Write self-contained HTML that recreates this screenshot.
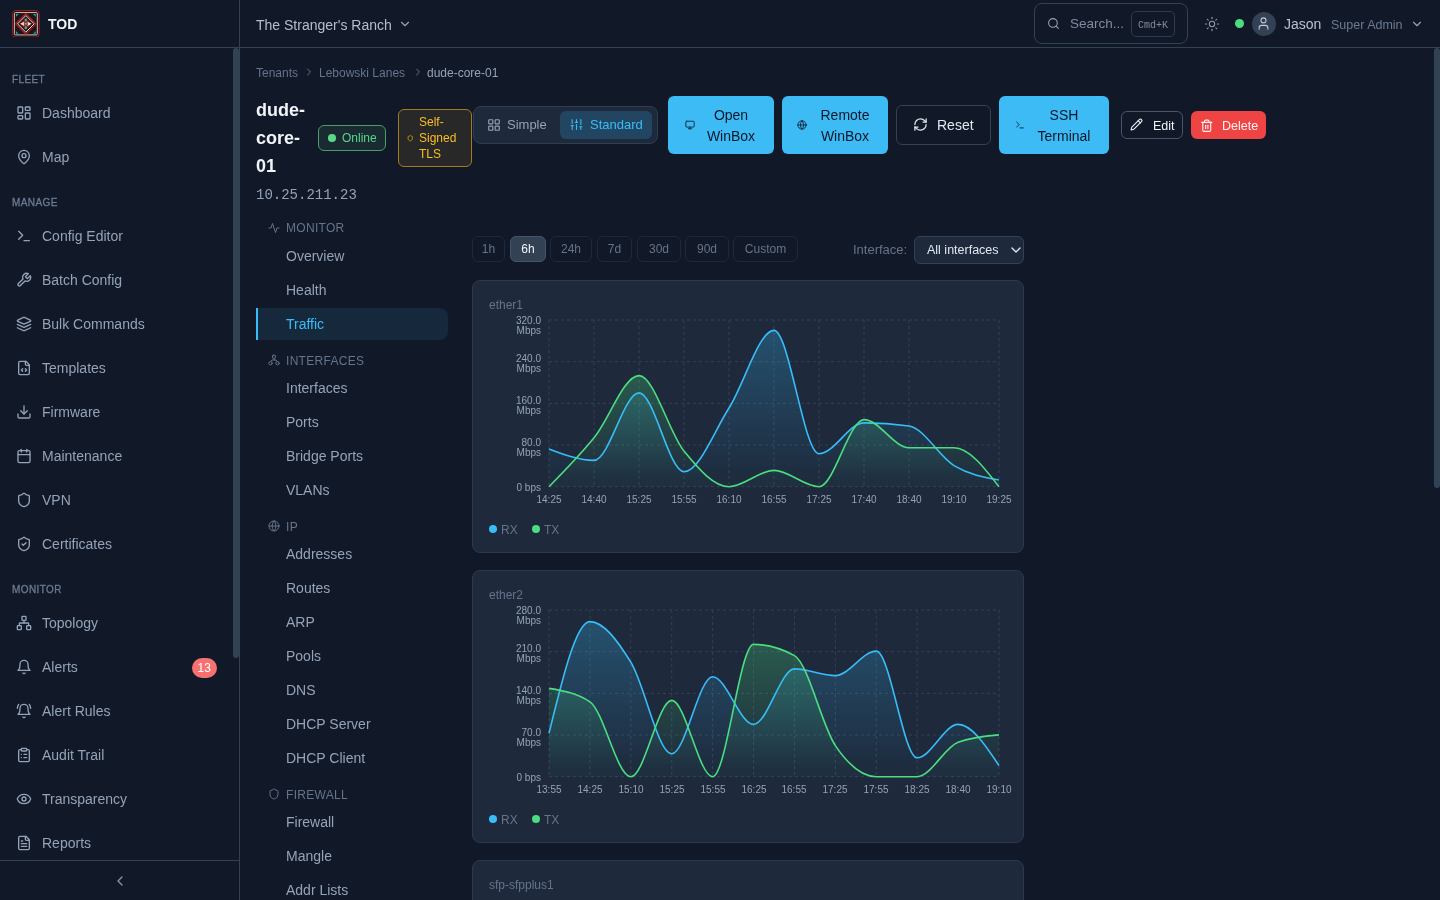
<!DOCTYPE html>
<html><head><meta charset="utf-8"><title>TOD</title>
<style>
html,body{margin:0;padding:0}
body{width:1440px;height:900px;overflow:hidden;position:relative;background:#111827;font-family:"Liberation Sans",sans-serif}
.t{position:absolute;white-space:nowrap;will-change:transform}
.ic{position:absolute;display:block}
.box{position:absolute}
.hl{position:absolute;height:1px;background:#334155}
.vl{position:absolute;width:1px;background:#334155}
.thumb{position:absolute;background:#334155;border-radius:3px}
.badge13{position:absolute;left:192px;top:658px;width:24.5px;height:20px;border-radius:10px;background:#f87171;color:#fff;font-size:12px;line-height:21px;text-align:center;will-change:transform}
.yl{width:41px;text-align:right;font-size:10px;line-height:10px;color:#94a3b8}
.xl{width:40px;text-align:center;font-size:10px;line-height:12px;color:#94a3b8}
</style></head><body>
<div id="sb">
<div class="hl" style="left:0;top:47px;width:239px"></div>
<div class="vl" style="left:239px;top:0;height:900px"></div>
<svg class="ic" style="left:12px;top:9.6px;width:27.7px;height:27.7px" viewBox="0 0 28 28">
<rect x="0.5" y="0.5" width="27" height="27" rx="3.5" fill="#23141c" stroke="#9b1c1c" stroke-width="1"/>
<rect x="2.4" y="2.6" width="23.2" height="22.6" rx="1.2" fill="none" stroke="#c9c3b5" stroke-width="1"/>
<path d="M14 3.6 L24.4 14 L14 24.4 L3.6 14Z" fill="none" stroke="#b91c1c" stroke-width="1.1"/>
<path d="M14 5.6 L22.4 14 L14 22.4 L5.6 14Z" fill="none" stroke="#e6dfcf" stroke-width="1"/>
<path d="M8 14 L14 8 L20 14 L14 20Z" fill="#8f1d1d"/>
<path d="M8.3 14 L12.4 11.8 L12.4 16.2Z" fill="#f5ecd0"/><path d="M19.7 14 L15.6 11.8 L15.6 16.2Z" fill="#f5ecd0"/>
<circle cx="14" cy="14" r="1.7" fill="none" stroke="#b91c1c" stroke-width="0.8"/><circle cx="14" cy="14" r="1" fill="#2dd4bf"/>
<path d="M12.8 8.8h2.4l-0.4 2.8h-1.6z" fill="#2ab5a5"/><path d="M12.8 19.2h2.4l-0.4-2.8h-1.6z" fill="#2ab5a5"/>
<path d="M4 4h2.8l-2.8 2.8z" fill="#14a898"/><path d="M24 4h-2.8l2.8 2.8z" fill="#14a898"/><path d="M4 24h2.8l-2.8-2.8z" fill="#14a898"/><path d="M24 24h-2.8l2.8-2.8z" fill="#14a898"/>
</svg>
<div class="t" style="left:48px;top:14.00px;font-size:14px;line-height:20px;color:#f1f5f9;font-weight:700;">TOD</div>
<div class="t" style="left:12px;top:73.10px;font-size:10px;line-height:14px;color:#6b7b92;font-weight:400;letter-spacing:0.4px;-webkit-text-stroke:0.3px #6b7b92;">FLEET</div>
<svg class="ic" style="left:16px;top:105px;width:16px;height:16px" viewBox="0 0 24 24" fill="none" stroke="#94a3b8" stroke-width="2" stroke-linecap="round" stroke-linejoin="round"><rect width="7" height="9" x="3" y="3" rx="1"/><rect width="7" height="5" x="14" y="3" rx="1"/><rect width="7" height="9" x="14" y="12" rx="1"/><rect width="7" height="5" x="3" y="16" rx="1"/></svg>
<div class="t" style="left:42px;top:102.60px;font-size:14px;line-height:20px;color:#94a3b8;font-weight:400;">Dashboard</div>
<svg class="ic" style="left:16px;top:149px;width:16px;height:16px" viewBox="0 0 24 24" fill="none" stroke="#94a3b8" stroke-width="2" stroke-linecap="round" stroke-linejoin="round"><path d="M20 10c0 4.993-5.539 10.193-7.399 11.799a1 1 0 0 1-1.202 0C9.539 20.193 4 14.993 4 10a8 8 0 0 1 16 0"/><circle cx="12" cy="10" r="3"/></svg>
<div class="t" style="left:42px;top:146.60px;font-size:14px;line-height:20px;color:#94a3b8;font-weight:400;">Map</div>
<div class="t" style="left:12px;top:195.60px;font-size:10px;line-height:14px;color:#6b7b92;font-weight:400;letter-spacing:0.4px;-webkit-text-stroke:0.3px #6b7b92;">MANAGE</div>
<svg class="ic" style="left:16px;top:228px;width:16px;height:16px" viewBox="0 0 24 24" fill="none" stroke="#94a3b8" stroke-width="2" stroke-linecap="round" stroke-linejoin="round"><polyline points="4 17 10 11 4 5"/><line x1="12" x2="20" y1="19" y2="19"/></svg>
<div class="t" style="left:42px;top:225.60px;font-size:14px;line-height:20px;color:#94a3b8;font-weight:400;">Config Editor</div>
<svg class="ic" style="left:16px;top:272px;width:16px;height:16px" viewBox="0 0 24 24" fill="none" stroke="#94a3b8" stroke-width="2" stroke-linecap="round" stroke-linejoin="round"><path d="M14.7 6.3a1 1 0 0 0 0 1.4l1.6 1.6a1 1 0 0 0 1.4 0l3.77-3.77a6 6 0 0 1-7.94 7.94l-6.91 6.91a2.12 2.12 0 0 1-3-3l6.91-6.91a6 6 0 0 1 7.94-7.94l-3.76 3.76z"/></svg>
<div class="t" style="left:42px;top:269.60px;font-size:14px;line-height:20px;color:#94a3b8;font-weight:400;">Batch Config</div>
<svg class="ic" style="left:16px;top:316px;width:16px;height:16px" viewBox="0 0 24 24" fill="none" stroke="#94a3b8" stroke-width="2" stroke-linecap="round" stroke-linejoin="round"><path d="m12.83 2.18a2 2 0 0 0-1.66 0L2.6 6.08a1 1 0 0 0 0 1.83l8.58 3.91a2 2 0 0 0 1.66 0l8.58-3.9a1 1 0 0 0 0-1.83Z"/><path d="m22 17.65-9.17 4.16a2 2 0 0 1-1.66 0L2 17.65"/><path d="m22 12.65-9.17 4.16a2 2 0 0 1-1.66 0L2 12.65"/></svg>
<div class="t" style="left:42px;top:313.60px;font-size:14px;line-height:20px;color:#94a3b8;font-weight:400;">Bulk Commands</div>
<svg class="ic" style="left:16px;top:360px;width:16px;height:16px" viewBox="0 0 24 24" fill="none" stroke="#94a3b8" stroke-width="2" stroke-linecap="round" stroke-linejoin="round"><path d="M15 2H6a2 2 0 0 0-2 2v16a2 2 0 0 0 2 2h12a2 2 0 0 0 2-2V7Z"/><path d="M14 2v4a2 2 0 0 0 2 2h4"/><path d="m10 13-2 2 2 2"/><path d="m14 17 2-2-2-2"/></svg>
<div class="t" style="left:42px;top:357.60px;font-size:14px;line-height:20px;color:#94a3b8;font-weight:400;">Templates</div>
<svg class="ic" style="left:16px;top:404px;width:16px;height:16px" viewBox="0 0 24 24" fill="none" stroke="#94a3b8" stroke-width="2" stroke-linecap="round" stroke-linejoin="round"><path d="M21 15v4a2 2 0 0 1-2 2H5a2 2 0 0 1-2-2v-4"/><polyline points="7 10 12 15 17 10"/><line x1="12" x2="12" y1="15" y2="3"/></svg>
<div class="t" style="left:42px;top:401.60px;font-size:14px;line-height:20px;color:#94a3b8;font-weight:400;">Firmware</div>
<svg class="ic" style="left:16px;top:448px;width:16px;height:16px" viewBox="0 0 24 24" fill="none" stroke="#94a3b8" stroke-width="2" stroke-linecap="round" stroke-linejoin="round"><path d="M8 2v4"/><path d="M16 2v4"/><rect width="18" height="18" x="3" y="4" rx="2"/><path d="M3 10h18"/></svg>
<div class="t" style="left:42px;top:445.60px;font-size:14px;line-height:20px;color:#94a3b8;font-weight:400;">Maintenance</div>
<svg class="ic" style="left:16px;top:492px;width:16px;height:16px" viewBox="0 0 24 24" fill="none" stroke="#94a3b8" stroke-width="2" stroke-linecap="round" stroke-linejoin="round"><path d="M20 13c0 5-3.5 7.5-7.66 8.95a1 1 0 0 1-.67-.01C7.5 20.5 4 18 4 13V6a1 1 0 0 1 1-1c2 0 4.5-1.2 6.24-2.72a1.17 1.17 0 0 1 1.52 0C14.51 3.810 17 5 19 5a1 1 0 0 1 1 1z"/></svg>
<div class="t" style="left:42px;top:489.60px;font-size:14px;line-height:20px;color:#94a3b8;font-weight:400;">VPN</div>
<svg class="ic" style="left:16px;top:536px;width:16px;height:16px" viewBox="0 0 24 24" fill="none" stroke="#94a3b8" stroke-width="2" stroke-linecap="round" stroke-linejoin="round"><path d="M20 13c0 5-3.5 7.5-7.66 8.95a1 1 0 0 1-.67-.01C7.5 20.5 4 18 4 13V6a1 1 0 0 1 1-1c2 0 4.5-1.2 6.24-2.72a1.17 1.17 0 0 1 1.52 0C14.51 3.810 17 5 19 5a1 1 0 0 1 1 1z"/><path d="m9 12 2 2 4-4"/></svg>
<div class="t" style="left:42px;top:533.60px;font-size:14px;line-height:20px;color:#94a3b8;font-weight:400;">Certificates</div>
<div class="t" style="left:12px;top:582.60px;font-size:10px;line-height:14px;color:#6b7b92;font-weight:400;letter-spacing:0.4px;-webkit-text-stroke:0.3px #6b7b92;">MONITOR</div>
<svg class="ic" style="left:16px;top:615px;width:16px;height:16px" viewBox="0 0 24 24" fill="none" stroke="#94a3b8" stroke-width="2" stroke-linecap="round" stroke-linejoin="round"><rect x="16" y="16" width="6" height="6" rx="1"/><rect x="2" y="16" width="6" height="6" rx="1"/><rect x="9" y="2" width="6" height="6" rx="1"/><path d="M5 16v-3a1 1 0 0 1 1-1h12a1 1 0 0 1 1 1v3"/><path d="M12 12V8"/></svg>
<div class="t" style="left:42px;top:612.60px;font-size:14px;line-height:20px;color:#94a3b8;font-weight:400;">Topology</div>
<svg class="ic" style="left:16px;top:659px;width:16px;height:16px" viewBox="0 0 24 24" fill="none" stroke="#94a3b8" stroke-width="2" stroke-linecap="round" stroke-linejoin="round"><path d="M6 8a6 6 0 0 1 12 0c0 7 3 9 3 9H3s3-2 3-9"/><path d="M10.3 21a1.94 1.94 0 0 0 3.4 0"/></svg>
<div class="t" style="left:42px;top:656.60px;font-size:14px;line-height:20px;color:#94a3b8;font-weight:400;">Alerts</div>
<svg class="ic" style="left:16px;top:703px;width:16px;height:16px" viewBox="0 0 24 24" fill="none" stroke="#94a3b8" stroke-width="2" stroke-linecap="round" stroke-linejoin="round"><path d="M6 8a6 6 0 0 1 12 0c0 7 3 9 3 9H3s3-2 3-9"/><path d="M10.3 21a1.94 1.94 0 0 0 3.4 0"/><path d="M4 2C2.8 3.7 2 5.7 2 8"/><path d="M22 8c0-2.3-.8-4.3-2-6"/></svg>
<div class="t" style="left:42px;top:700.60px;font-size:14px;line-height:20px;color:#94a3b8;font-weight:400;">Alert Rules</div>
<svg class="ic" style="left:16px;top:747px;width:16px;height:16px" viewBox="0 0 24 24" fill="none" stroke="#94a3b8" stroke-width="2" stroke-linecap="round" stroke-linejoin="round"><rect width="8" height="4" x="8" y="2" rx="1" ry="1"/><path d="M16 4h2a2 2 0 0 1 2 2v14a2 2 0 0 1-2 2H6a2 2 0 0 1-2-2V6a2 2 0 0 1 2-2h2"/><path d="M12 11h4"/><path d="M12 16h4"/><path d="M8 11h.01"/><path d="M8 16h.01"/></svg>
<div class="t" style="left:42px;top:744.60px;font-size:14px;line-height:20px;color:#94a3b8;font-weight:400;">Audit Trail</div>
<svg class="ic" style="left:16px;top:791px;width:16px;height:16px" viewBox="0 0 24 24" fill="none" stroke="#94a3b8" stroke-width="2" stroke-linecap="round" stroke-linejoin="round"><path d="M2.062 12.348a1 1 0 0 1 0-.696 10.75 10.75 0 0 1 19.876 0 1 1 0 0 1 0 .696 10.75 10.75 0 0 1-19.876 0"/><circle cx="12" cy="12" r="3"/></svg>
<div class="t" style="left:42px;top:788.60px;font-size:14px;line-height:20px;color:#94a3b8;font-weight:400;">Transparency</div>
<svg class="ic" style="left:16px;top:835px;width:16px;height:16px" viewBox="0 0 24 24" fill="none" stroke="#94a3b8" stroke-width="2" stroke-linecap="round" stroke-linejoin="round"><path d="M15 2H6a2 2 0 0 0-2 2v16a2 2 0 0 0 2 2h12a2 2 0 0 0 2-2V7Z"/><path d="M14 2v4a2 2 0 0 0 2 2h4"/><path d="M10 9H8"/><path d="M16 13H8"/><path d="M16 17H8"/></svg>
<div class="t" style="left:42px;top:832.60px;font-size:14px;line-height:20px;color:#94a3b8;font-weight:400;">Reports</div>
<div class="badge13">13</div>
<div class="thumb" style="left:233px;top:48px;width:6px;height:610px"></div>
<div class="hl" style="left:0;top:860px;width:239px"></div>
<svg class="ic" style="left:111.5px;top:872.5px;width:16px;height:16px" viewBox="0 0 24 24" fill="none" stroke="#8594aa" stroke-width="2" stroke-linecap="round" stroke-linejoin="round"><path d="m15 18-6-6 6-6"/></svg>
</div>
<div class="hl" style="left:240px;top:47px;width:1200px"></div>
<div class="t" style="left:256px;top:14.50px;font-size:14px;line-height:20px;color:#b3bfce;font-weight:400;">The Stranger's Ranch</div>
<svg class="ic" style="left:397.6px;top:16.5px;width:14px;height:14px" viewBox="0 0 24 24" fill="none" stroke="#94a3b8" stroke-width="2" stroke-linecap="round" stroke-linejoin="round"><path d="m6 9 6 6 6-6"/></svg>
<div class="box" style="left:1034px;top:3px;width:152px;height:39px;border-radius:8px;border:1px solid #334155"></div>
<svg class="ic" style="left:1047px;top:17px;width:13px;height:13px" viewBox="0 0 24 24" fill="none" stroke="#94a3b8" stroke-width="2" stroke-linecap="round" stroke-linejoin="round"><circle cx="11" cy="11" r="8"/><path d="m21 21-4.3-4.3"/></svg>
<div class="t" style="left:1069.5px;top:14.30px;font-size:13.5px;line-height:19px;color:#7f8b9f;font-weight:400;">Search...</div>
<div class="box" style="left:1130.5px;top:10.5px;width:42px;height:24px;border-radius:5px;border:1px solid #2f3b4e"></div>
<div class="t" style="left:1137.5px;top:18.50px;font-size:10px;line-height:14px;color:#7f8b9f;font-weight:400;font-family:'Liberation Mono',monospace;">Cmd+K</div>
<svg class="ic" style="left:1203.5px;top:15.5px;width:16px;height:16px" viewBox="0 0 24 24" fill="none" stroke="#8e9bb0" stroke-width="1.6" stroke-linecap="round" stroke-linejoin="round"><circle cx="12" cy="12" r="4"/><path d="M12 2v2"/><path d="M12 20v2"/><path d="m4.93 4.93 1.41 1.41"/><path d="m17.66 17.66 1.41 1.41"/><path d="M2 12h2"/><path d="M20 12h2"/><path d="m6.34 17.66-1.41 1.41"/><path d="m19.07 4.93-1.41 1.41"/></svg>
<div class="box" style="left:1235px;top:19px;width:9px;height:9px;border-radius:50%;background:#4ade80"></div>
<div class="box" style="left:1252px;top:12px;width:24px;height:24px;border-radius:50%;background:#334155"></div>
<svg class="ic" style="left:1256px;top:16px;width:15px;height:15px" viewBox="0 0 24 24" fill="none" stroke="#c0cad8" stroke-width="1.7" stroke-linecap="round" stroke-linejoin="round"><path d="M19 21v-2a4 4 0 0 0-4-4H9a4 4 0 0 0-4 4v2"/><circle cx="12" cy="7" r="4"/></svg>
<div class="t" style="left:1284px;top:13.50px;font-size:14px;line-height:20px;color:#b8c2d0;font-weight:400;">Jason</div>
<div class="t" style="left:1331px;top:16.00px;font-size:12.5px;line-height:18px;color:#6b7a90;font-weight:400;">Super Admin</div>
<svg class="ic" style="left:1409.5px;top:17px;width:14px;height:14px" viewBox="0 0 24 24" fill="none" stroke="#94a3b8" stroke-width="2" stroke-linecap="round" stroke-linejoin="round"><path d="m6 9 6 6 6-6"/></svg>
<div class="thumb" style="left:1434px;top:48px;width:6px;height:440px"></div>
<div class="t" style="left:256px;top:64.50px;font-size:12px;line-height:17px;color:#64748b;font-weight:400;">Tenants</div>
<svg class="ic" style="left:303px;top:66px;width:12px;height:12px" viewBox="0 0 24 24" fill="none" stroke="#64748b" stroke-width="2" stroke-linecap="round" stroke-linejoin="round"><path d="m9 18 6-6-6-6"/></svg>
<div class="t" style="left:319px;top:64.50px;font-size:12px;line-height:17px;color:#64748b;font-weight:400;">Lebowski Lanes</div>
<svg class="ic" style="left:412px;top:66px;width:12px;height:12px" viewBox="0 0 24 24" fill="none" stroke="#64748b" stroke-width="2" stroke-linecap="round" stroke-linejoin="round"><path d="m9 18 6-6-6-6"/></svg>
<div class="t" style="left:427px;top:64.50px;font-size:12px;line-height:17px;color:#94a3b8;font-weight:400;">dude-core-01</div>
<div class="t" style="left:256px;top:96px;font-size:18px;line-height:28px;font-weight:700;color:#f1f5f9">dude-<br>core-<br>01</div>
<div class="t" style="left:256px;top:185px;font-size:14px;line-height:20px;color:#94a3b8;font-family:'Liberation Mono',monospace">10.25.211.23</div>
<div class="box" style="left:318px;top:125px;width:66px;height:24px;border-radius:6px;border:1px solid #46a06c;background:#1a2a31"></div>
<div class="box" style="left:328px;top:134px;width:7.5px;height:7.5px;border-radius:50%;background:#5ad88a"></div>
<div class="t" style="left:341.7px;top:130.00px;font-size:12px;line-height:17px;color:#58d68a;font-weight:400;">Online</div>
<div class="box" style="left:398px;top:109px;width:72px;height:56px;border-radius:6px;border:1px solid #a07c1c;background:#282828"></div>
<svg class="ic" style="left:406.5px;top:135px;width:6.5px;height:6.5px" viewBox="0 0 24 24" fill="none" stroke="#eab308" stroke-width="2.5" stroke-linecap="round" stroke-linejoin="round"><path d="M20 13c0 5-3.5 7.5-7.66 8.95a1 1 0 0 1-.67-.01C7.5 20.5 4 18 4 13V6a1 1 0 0 1 1-1c2 0 4.5-1.2 6.24-2.72a1.17 1.17 0 0 1 1.52 0C14.51 3.810 17 5 19 5a1 1 0 0 1 1 1z"/></svg>
<div class="t" style="left:419px;top:114px;font-size:12px;line-height:16px;color:#fbbf24">Self-<br>Signed<br>TLS</div>
<div class="box" style="left:472.5px;top:106px;width:183px;height:36px;border-radius:8px;border:1px solid #2e3d52;background:#1e293b"></div>
<svg class="ic" style="left:487px;top:117.5px;width:14px;height:14px" viewBox="0 0 24 24" fill="none" stroke="#94a3b8" stroke-width="2" stroke-linecap="round" stroke-linejoin="round"><rect width="7" height="7" x="3" y="3" rx="1"/><rect width="7" height="7" x="14" y="3" rx="1"/><rect width="7" height="7" x="14" y="14" rx="1"/><rect width="7" height="7" x="3" y="14" rx="1"/></svg>
<div class="t" style="left:507px;top:116.00px;font-size:13px;line-height:18px;color:#94a3b8;font-weight:400;">Simple</div>
<div class="box" style="left:560px;top:111px;width:92px;height:28px;border-radius:6px;background:#224662"></div>
<svg class="ic" style="left:570px;top:118px;width:13px;height:13px" viewBox="0 0 24 24" fill="none" stroke="#38bdf8" stroke-width="2" stroke-linecap="round" stroke-linejoin="round"><line x1="4" x2="4" y1="21" y2="14"/><line x1="4" x2="4" y1="10" y2="3"/><line x1="12" x2="12" y1="21" y2="12"/><line x1="12" x2="12" y1="8" y2="3"/><line x1="20" x2="20" y1="21" y2="16"/><line x1="20" x2="20" y1="12" y2="3"/><line x1="2" x2="6" y1="14" y2="14"/><line x1="10" x2="14" y1="8" y2="8"/><line x1="18" x2="22" y1="16" y2="16"/></svg>
<div class="t" style="left:590px;top:116.00px;font-size:13px;line-height:18px;color:#38bdf8;font-weight:400;">Standard</div>
<div class="box" style="left:668px;top:96px;width:106px;height:58px;border-radius:6px;background:#3dbbf5"></div>
<svg class="ic" style="left:684.5px;top:120.0px;width:10px;height:10px" viewBox="0 0 24 24" fill="none" stroke="#0f172a" stroke-width="2" stroke-linecap="round" stroke-linejoin="round"><rect width="20" height="14" x="2" y="3" rx="2"/><line x1="8" x2="16" y1="21" y2="21"/><line x1="12" x2="12" y1="17" y2="21"/></svg>
<div class="t" style="left:698px;top:105px;width:66px;text-align:center;font-size:14px;line-height:21px;color:#0f172a">Open<br>WinBox</div>
<div class="box" style="left:782px;top:96px;width:106px;height:58px;border-radius:6px;background:#3dbbf5"></div>
<svg class="ic" style="left:797px;top:120.0px;width:10px;height:10px" viewBox="0 0 24 24" fill="none" stroke="#0f172a" stroke-width="2" stroke-linecap="round" stroke-linejoin="round"><circle cx="12" cy="12" r="10"/><path d="M12 2a14.5 14.5 0 0 0 0 20 14.5 14.5 0 0 0 0-20"/><path d="M2 12h20"/></svg>
<div class="t" style="left:812px;top:105px;width:66px;text-align:center;font-size:14px;line-height:21px;color:#0f172a">Remote<br>WinBox</div>
<div class="box" style="left:896px;top:105px;width:93px;height:38px;border-radius:6px;border:1px solid #334155"></div>
<svg class="ic" style="left:913px;top:117px;width:15px;height:15px" viewBox="0 0 24 24" fill="none" stroke="#e2e8f0" stroke-width="2" stroke-linecap="round" stroke-linejoin="round"><path d="M3 12a9 9 0 0 1 9-9 9.75 9.75 0 0 1 6.74 2.74L21 8"/><path d="M21 3v5h-5"/><path d="M21 12a9 9 0 0 1-9 9 9.75 9.75 0 0 1-6.74-2.74L3 16"/><path d="M8 16H3v5"/></svg>
<div class="t" style="left:937px;top:115.00px;font-size:14px;line-height:20px;color:#e2e8f0;font-weight:400;">Reset</div>
<div class="box" style="left:999px;top:96px;width:110px;height:58px;border-radius:6px;background:#3dbbf5"></div>
<svg class="ic" style="left:1015px;top:120.0px;width:10px;height:10px" viewBox="0 0 24 24" fill="none" stroke="#0f172a" stroke-width="2" stroke-linecap="round" stroke-linejoin="round"><polyline points="4 17 10 11 4 5"/><line x1="12" x2="20" y1="19" y2="19"/></svg>
<div class="t" style="left:1029px;top:105px;width:70px;text-align:center;font-size:14px;line-height:21px;color:#0f172a">SSH<br>Terminal</div>
<div class="box" style="left:1121px;top:111px;width:60px;height:26px;border-radius:6px;border:1px solid #475569"></div>
<svg class="ic" style="left:1130px;top:118px;width:13px;height:13px" viewBox="0 0 24 24" fill="none" stroke="#f1f5f9" stroke-width="2" stroke-linecap="round" stroke-linejoin="round"><path d="M21.174 6.812a1 1 0 0 0-3.986-3.987L3.842 16.174a2 2 0 0 0-.5.83l-1.321 4.352a.5.5 0 0 0 .623.622l4.353-1.32a2 2 0 0 0 .83-.497z"/><path d="m15 5 4 4"/></svg>
<div class="t" style="left:1152.5px;top:116.50px;font-size:12.5px;line-height:18px;color:#f1f5f9;font-weight:400;">Edit</div>
<div class="box" style="left:1191px;top:111px;width:74.5px;height:28px;border-radius:6px;background:#ef4444"></div>
<svg class="ic" style="left:1199.5px;top:118.5px;width:13.5px;height:13.5px" viewBox="0 0 24 24" fill="none" stroke="#fef2f2" stroke-width="2" stroke-linecap="round" stroke-linejoin="round"><path d="M3 6h18"/><path d="M19 6v14c0 1-1 2-2 2H7c-1 0-2-1-2-2V6"/><path d="M8 6V4c0-1 1-2 2-2h4c1 0 2 1 2 2v2"/><line x1="10" x2="10" y1="11" y2="17"/><line x1="14" x2="14" y1="11" y2="17"/></svg>
<div class="t" style="left:1221.5px;top:116.50px;font-size:12.5px;line-height:18px;color:#fef2f2;font-weight:400;">Delete</div>
<svg class="ic" style="left:268px;top:221.7px;width:12px;height:12px" viewBox="0 0 24 24" fill="none" stroke="#64748b" stroke-width="2" stroke-linecap="round" stroke-linejoin="round"><path d="M22 12h-4l-3 9L9 3l-3 9H2"/></svg>
<div class="t" style="left:286px;top:220.20px;font-size:12px;line-height:17px;color:#64748b;font-weight:400;letter-spacing:0.3px;">MONITOR</div>
<div class="t" style="left:286px;top:246.20px;font-size:14px;line-height:20px;color:#94a3b8;font-weight:400;">Overview</div>
<div class="t" style="left:286px;top:280.20px;font-size:14px;line-height:20px;color:#94a3b8;font-weight:400;">Health</div>
<div class="box" style="left:256px;top:308px;width:192px;height:32px;border-radius:0 8px 8px 0;background:#16283c"></div>
<div class="box" style="left:256px;top:308px;width:2px;height:32px;background:#38bdf8"></div>
<div class="t" style="left:286px;top:314.20px;font-size:14px;line-height:20px;color:#38bdf8;font-weight:400;">Traffic</div>
<svg class="ic" style="left:268px;top:354px;width:12px;height:12px" viewBox="0 0 24 24" fill="none" stroke="#64748b" stroke-width="2" stroke-linecap="round" stroke-linejoin="round"><rect x="9" y="2.5" width="6" height="6" rx="1.5"/><circle cx="5" cy="18.5" r="3.3"/><circle cx="19" cy="18.5" r="3.3"/><path d="M5.5 15.2L8 12h8l2.5 3.2"/><path d="M12 12V8.5"/></svg>
<div class="t" style="left:286px;top:352.50px;font-size:12px;line-height:17px;color:#64748b;font-weight:400;letter-spacing:0.3px;">INTERFACES</div>
<div class="t" style="left:286px;top:378.20px;font-size:14px;line-height:20px;color:#94a3b8;font-weight:400;">Interfaces</div>
<div class="t" style="left:286px;top:412.20px;font-size:14px;line-height:20px;color:#94a3b8;font-weight:400;">Ports</div>
<div class="t" style="left:286px;top:446.20px;font-size:14px;line-height:20px;color:#94a3b8;font-weight:400;">Bridge Ports</div>
<div class="t" style="left:286px;top:480.20px;font-size:14px;line-height:20px;color:#94a3b8;font-weight:400;">VLANs</div>
<svg class="ic" style="left:268px;top:520px;width:12px;height:12px" viewBox="0 0 24 24" fill="none" stroke="#64748b" stroke-width="2" stroke-linecap="round" stroke-linejoin="round"><circle cx="12" cy="12" r="10"/><path d="M12 2a14.5 14.5 0 0 0 0 20 14.5 14.5 0 0 0 0-20"/><path d="M2 12h20"/></svg>
<div class="t" style="left:286px;top:518.50px;font-size:12px;line-height:17px;color:#64748b;font-weight:400;letter-spacing:0.3px;">IP</div>
<div class="t" style="left:286px;top:544.20px;font-size:14px;line-height:20px;color:#94a3b8;font-weight:400;">Addresses</div>
<div class="t" style="left:286px;top:578.20px;font-size:14px;line-height:20px;color:#94a3b8;font-weight:400;">Routes</div>
<div class="t" style="left:286px;top:612.20px;font-size:14px;line-height:20px;color:#94a3b8;font-weight:400;">ARP</div>
<div class="t" style="left:286px;top:646.20px;font-size:14px;line-height:20px;color:#94a3b8;font-weight:400;">Pools</div>
<div class="t" style="left:286px;top:680.20px;font-size:14px;line-height:20px;color:#94a3b8;font-weight:400;">DNS</div>
<div class="t" style="left:286px;top:714.20px;font-size:14px;line-height:20px;color:#94a3b8;font-weight:400;">DHCP Server</div>
<div class="t" style="left:286px;top:748.20px;font-size:14px;line-height:20px;color:#94a3b8;font-weight:400;">DHCP Client</div>
<svg class="ic" style="left:268px;top:788px;width:12px;height:12px" viewBox="0 0 24 24" fill="none" stroke="#64748b" stroke-width="2" stroke-linecap="round" stroke-linejoin="round"><path d="M20 13c0 5-3.5 7.5-7.66 8.95a1 1 0 0 1-.67-.01C7.5 20.5 4 18 4 13V6a1 1 0 0 1 1-1c2 0 4.5-1.2 6.24-2.72a1.17 1.17 0 0 1 1.52 0C14.51 3.810 17 5 19 5a1 1 0 0 1 1 1z"/></svg>
<div class="t" style="left:286px;top:786.50px;font-size:12px;line-height:17px;color:#64748b;font-weight:400;letter-spacing:0.3px;">FIREWALL</div>
<div class="t" style="left:286px;top:812.20px;font-size:14px;line-height:20px;color:#94a3b8;font-weight:400;">Firewall</div>
<div class="t" style="left:286px;top:846.20px;font-size:14px;line-height:20px;color:#94a3b8;font-weight:400;">Mangle</div>
<div class="t" style="left:286px;top:880.20px;font-size:14px;line-height:20px;color:#94a3b8;font-weight:400;">Addr Lists</div>
<div class="box" style="left:472px;top:236px;width:33px;height:26px;border-radius:6px;border:1px solid #1e293b;box-sizing:border-box"></div>
<div class="t" style="left:472px;top:241px;width:33px;text-align:center;font-size:12px;line-height:16px;color:#64748b">1h</div>
<div class="box" style="left:509.5px;top:236px;width:36px;height:26px;border-radius:6px;border:1px solid #475569;background:#334155;box-sizing:border-box"></div>
<div class="t" style="left:509.5px;top:241px;width:36px;text-align:center;font-size:12px;line-height:16px;color:#f1f5f9">6h</div>
<div class="box" style="left:550px;top:236px;width:42px;height:26px;border-radius:6px;border:1px solid #1e293b;box-sizing:border-box"></div>
<div class="t" style="left:550px;top:241px;width:42px;text-align:center;font-size:12px;line-height:16px;color:#64748b">24h</div>
<div class="box" style="left:597px;top:236px;width:35px;height:26px;border-radius:6px;border:1px solid #1e293b;box-sizing:border-box"></div>
<div class="t" style="left:597px;top:241px;width:35px;text-align:center;font-size:12px;line-height:16px;color:#64748b">7d</div>
<div class="box" style="left:637px;top:236px;width:44px;height:26px;border-radius:6px;border:1px solid #1e293b;box-sizing:border-box"></div>
<div class="t" style="left:637px;top:241px;width:44px;text-align:center;font-size:12px;line-height:16px;color:#64748b">30d</div>
<div class="box" style="left:685px;top:236px;width:44px;height:26px;border-radius:6px;border:1px solid #1e293b;box-sizing:border-box"></div>
<div class="t" style="left:685px;top:241px;width:44px;text-align:center;font-size:12px;line-height:16px;color:#64748b">90d</div>
<div class="box" style="left:733px;top:236px;width:65px;height:26px;border-radius:6px;border:1px solid #1e293b;box-sizing:border-box"></div>
<div class="t" style="left:733px;top:241px;width:65px;text-align:center;font-size:12px;line-height:16px;color:#64748b">Custom</div>
<div class="t" style="left:853px;top:240.50px;font-size:13px;line-height:18px;color:#64748b;font-weight:400;">Interface:</div>
<div class="box" style="left:914px;top:236px;width:110px;height:28px;border-radius:6px;border:1px solid #334155;background:#1e293b;box-sizing:border-box"></div>
<div class="t" style="left:927px;top:240.50px;font-size:12.5px;line-height:18px;color:#e2e8f0;font-weight:400;">All interfaces</div>
<svg class="ic" style="left:1007.5px;top:242px;width:16px;height:16px" viewBox="0 0 24 24" fill="none" stroke="#e2e8f0" stroke-width="2" stroke-linecap="round" stroke-linejoin="round"><path d="m6 9 6 6 6-6"/></svg>
<div class="box" style="left:472px;top:280px;width:552px;height:273px;border-radius:8px;border:1px solid #2b3a50;background:#1e293b;box-sizing:border-box"></div>
<div class="t" style="left:489px;top:297.00px;font-size:12px;line-height:17px;color:#64748b;font-weight:400;">ether1</div>
<svg class="ic" style="left:0;top:0;width:1440px;height:900px;overflow:visible" viewBox="0 0 1440 900"><defs><linearGradient id="rxg280" x1="0" y1="0" x2="0" y2="1"><stop offset="5%" stop-color="#38bdf8" stop-opacity="0.26"/><stop offset="95%" stop-color="#38bdf8" stop-opacity="0.02"/></linearGradient><linearGradient id="txg280" x1="0" y1="0" x2="0" y2="1"><stop offset="5%" stop-color="#4ade80" stop-opacity="0.26"/><stop offset="95%" stop-color="#4ade80" stop-opacity="0.02"/></linearGradient></defs><line x1="549" x2="999" y1="320.00" y2="320.00" stroke="#334155" stroke-dasharray="3 3"/><line x1="549" x2="999" y1="361.68" y2="361.68" stroke="#334155" stroke-dasharray="3 3"/><line x1="549" x2="999" y1="403.35" y2="403.35" stroke="#334155" stroke-dasharray="3 3"/><line x1="549" x2="999" y1="445.02" y2="445.02" stroke="#334155" stroke-dasharray="3 3"/><line x1="549" x2="999" y1="486.70" y2="486.70" stroke="#334155" stroke-dasharray="3 3"/><line x1="549.00" x2="549.00" y1="320" y2="486.7" stroke="#334155" stroke-dasharray="3 3"/><line x1="594.00" x2="594.00" y1="320" y2="486.7" stroke="#334155" stroke-dasharray="3 3"/><line x1="639.00" x2="639.00" y1="320" y2="486.7" stroke="#334155" stroke-dasharray="3 3"/><line x1="684.00" x2="684.00" y1="320" y2="486.7" stroke="#334155" stroke-dasharray="3 3"/><line x1="729.00" x2="729.00" y1="320" y2="486.7" stroke="#334155" stroke-dasharray="3 3"/><line x1="774.00" x2="774.00" y1="320" y2="486.7" stroke="#334155" stroke-dasharray="3 3"/><line x1="819.00" x2="819.00" y1="320" y2="486.7" stroke="#334155" stroke-dasharray="3 3"/><line x1="864.00" x2="864.00" y1="320" y2="486.7" stroke="#334155" stroke-dasharray="3 3"/><line x1="909.00" x2="909.00" y1="320" y2="486.7" stroke="#334155" stroke-dasharray="3 3"/><line x1="999.00" x2="999.00" y1="320" y2="486.7" stroke="#334155" stroke-dasharray="3 3"/><path d="M549.00,448.90C564.00,454.65,579.00,460.40,594.00,460.40C609.00,460.40,624.00,392.90,639.00,392.90C654.00,392.90,669.00,471.80,684.00,471.80C699.00,471.80,714.00,431.57,729.00,408.00C744.00,384.43,759.00,330.40,774.00,330.40C789.00,330.40,804.00,453.80,819.00,453.80C834.00,453.80,849.00,422.90,864.00,422.90C879.00,422.90,894.00,423.93,909.00,426.00C924.00,428.07,939.00,456.60,954.00,465.60C969.00,474.60,984.00,477.30,999.00,480.00L999,486.7L549,486.7Z" fill="url(#rxg280)"/><path d="M549.00,486.70C564.00,471.51,579.00,456.32,594.00,437.80C609.00,419.28,624.00,375.60,639.00,375.60C654.00,375.60,669.00,432.58,684.00,451.10C699.00,469.62,714.00,486.70,729.00,486.70C744.00,486.70,759.00,470.40,774.00,470.40C789.00,470.40,804.00,486.70,819.00,486.70C834.00,486.70,849.00,419.60,864.00,419.60C879.00,419.60,894.00,447.80,909.00,447.80C924.00,447.80,939.00,447.80,954.00,447.80C969.00,447.80,984.00,467.25,999.00,486.70L999,486.7L549,486.7Z" fill="url(#txg280)"/><path d="M549.00,448.90C564.00,454.65,579.00,460.40,594.00,460.40C609.00,460.40,624.00,392.90,639.00,392.90C654.00,392.90,669.00,471.80,684.00,471.80C699.00,471.80,714.00,431.57,729.00,408.00C744.00,384.43,759.00,330.40,774.00,330.40C789.00,330.40,804.00,453.80,819.00,453.80C834.00,453.80,849.00,422.90,864.00,422.90C879.00,422.90,894.00,423.93,909.00,426.00C924.00,428.07,939.00,456.60,954.00,465.60C969.00,474.60,984.00,477.30,999.00,480.00" fill="none" stroke="#38bdf8" stroke-width="1.6"/><path d="M549.00,486.70C564.00,471.51,579.00,456.32,594.00,437.80C609.00,419.28,624.00,375.60,639.00,375.60C654.00,375.60,669.00,432.58,684.00,451.10C699.00,469.62,714.00,486.70,729.00,486.70C744.00,486.70,759.00,470.40,774.00,470.40C789.00,470.40,804.00,486.70,819.00,486.70C834.00,486.70,849.00,419.60,864.00,419.60C879.00,419.60,894.00,447.80,909.00,447.80C924.00,447.80,939.00,447.80,954.00,447.80C969.00,447.80,984.00,467.25,999.00,486.70" fill="none" stroke="#4ade80" stroke-width="1.6"/></svg>
<div class="t yl" style="left:500px;top:316.00px;">320.0<br>Mbps</div>
<div class="t yl" style="left:500px;top:354.18px;">240.0<br>Mbps</div>
<div class="t yl" style="left:500px;top:395.85px;">160.0<br>Mbps</div>
<div class="t yl" style="left:500px;top:437.52px;">80.0<br>Mbps</div>
<div class="t yl" style="left:500px;top:482.70px;">0 bps</div>
<div class="t xl" style="left:529.00px;top:494px;">14:25</div>
<div class="t xl" style="left:574.00px;top:494px;">14:40</div>
<div class="t xl" style="left:619.00px;top:494px;">15:25</div>
<div class="t xl" style="left:664.00px;top:494px;">15:55</div>
<div class="t xl" style="left:709.00px;top:494px;">16:10</div>
<div class="t xl" style="left:754.00px;top:494px;">16:55</div>
<div class="t xl" style="left:799.00px;top:494px;">17:25</div>
<div class="t xl" style="left:844.00px;top:494px;">17:40</div>
<div class="t xl" style="left:889.00px;top:494px;">18:40</div>
<div class="t xl" style="left:934.00px;top:494px;">19:10</div>
<div class="t xl" style="left:979.00px;top:494px;">19:25</div>
<div class="box" style="left:489px;top:525px;width:8px;height:8px;border-radius:50%;background:#38bdf8"></div>
<div class="t" style="left:501px;top:521.50px;font-size:12px;line-height:17px;color:#64748b;font-weight:400;">RX</div>
<div class="box" style="left:532px;top:525px;width:8px;height:8px;border-radius:50%;background:#4ade80"></div>
<div class="t" style="left:544px;top:521.50px;font-size:12px;line-height:17px;color:#64748b;font-weight:400;">TX</div>
<div class="box" style="left:472px;top:570px;width:552px;height:273px;border-radius:8px;border:1px solid #2b3a50;background:#1e293b;box-sizing:border-box"></div>
<div class="t" style="left:489px;top:587.00px;font-size:12px;line-height:17px;color:#64748b;font-weight:400;">ether2</div>
<svg class="ic" style="left:0;top:0;width:1440px;height:900px;overflow:visible" viewBox="0 0 1440 900"><defs><linearGradient id="rxg570" x1="0" y1="0" x2="0" y2="1"><stop offset="5%" stop-color="#38bdf8" stop-opacity="0.26"/><stop offset="95%" stop-color="#38bdf8" stop-opacity="0.02"/></linearGradient><linearGradient id="txg570" x1="0" y1="0" x2="0" y2="1"><stop offset="5%" stop-color="#4ade80" stop-opacity="0.26"/><stop offset="95%" stop-color="#4ade80" stop-opacity="0.02"/></linearGradient></defs><line x1="549" x2="999" y1="610.00" y2="610.00" stroke="#334155" stroke-dasharray="3 3"/><line x1="549" x2="999" y1="651.67" y2="651.67" stroke="#334155" stroke-dasharray="3 3"/><line x1="549" x2="999" y1="693.35" y2="693.35" stroke="#334155" stroke-dasharray="3 3"/><line x1="549" x2="999" y1="735.03" y2="735.03" stroke="#334155" stroke-dasharray="3 3"/><line x1="549" x2="999" y1="776.70" y2="776.70" stroke="#334155" stroke-dasharray="3 3"/><line x1="549.00" x2="549.00" y1="610" y2="776.7" stroke="#334155" stroke-dasharray="3 3"/><line x1="589.91" x2="589.91" y1="610" y2="776.7" stroke="#334155" stroke-dasharray="3 3"/><line x1="630.82" x2="630.82" y1="610" y2="776.7" stroke="#334155" stroke-dasharray="3 3"/><line x1="671.73" x2="671.73" y1="610" y2="776.7" stroke="#334155" stroke-dasharray="3 3"/><line x1="712.64" x2="712.64" y1="610" y2="776.7" stroke="#334155" stroke-dasharray="3 3"/><line x1="753.55" x2="753.55" y1="610" y2="776.7" stroke="#334155" stroke-dasharray="3 3"/><line x1="794.45" x2="794.45" y1="610" y2="776.7" stroke="#334155" stroke-dasharray="3 3"/><line x1="835.36" x2="835.36" y1="610" y2="776.7" stroke="#334155" stroke-dasharray="3 3"/><line x1="876.27" x2="876.27" y1="610" y2="776.7" stroke="#334155" stroke-dasharray="3 3"/><line x1="917.18" x2="917.18" y1="610" y2="776.7" stroke="#334155" stroke-dasharray="3 3"/><line x1="999.00" x2="999.00" y1="610" y2="776.7" stroke="#334155" stroke-dasharray="3 3"/><path d="M549.00,733.30C562.64,677.45,576.27,621.60,589.91,621.60C603.55,621.60,617.18,640.17,630.82,662.20C644.45,684.23,658.09,753.80,671.73,753.80C685.36,753.80,699.00,676.70,712.64,676.70C726.27,676.70,739.91,724.40,753.55,724.40C767.18,724.40,780.82,668.90,794.45,668.90C808.09,668.90,821.73,675.60,835.36,675.60C849.00,675.60,862.64,651.10,876.27,651.10C889.91,651.10,903.55,757.80,917.18,757.80C930.82,757.80,944.45,724.40,958.09,724.40C971.73,724.40,985.36,745.00,999.00,765.60L999,776.7L549,776.7Z" fill="url(#rxg570)"/><path d="M549.00,688.40C562.64,690.63,576.27,692.87,589.91,701.80C603.55,710.73,617.18,776.70,630.82,776.70C644.45,776.70,658.09,700.40,671.73,700.40C685.36,700.40,699.00,776.70,712.64,776.70C726.27,776.70,739.91,644.40,753.55,644.40C767.18,644.40,780.82,648.13,794.45,655.60C808.09,663.07,821.73,725.42,835.36,745.60C849.00,765.78,862.64,776.70,876.27,776.70C889.91,776.70,903.55,776.70,917.18,776.70C930.82,776.70,944.45,747.07,958.09,742.20C971.73,737.33,985.36,736.12,999.00,734.90L999,776.7L549,776.7Z" fill="url(#txg570)"/><path d="M549.00,733.30C562.64,677.45,576.27,621.60,589.91,621.60C603.55,621.60,617.18,640.17,630.82,662.20C644.45,684.23,658.09,753.80,671.73,753.80C685.36,753.80,699.00,676.70,712.64,676.70C726.27,676.70,739.91,724.40,753.55,724.40C767.18,724.40,780.82,668.90,794.45,668.90C808.09,668.90,821.73,675.60,835.36,675.60C849.00,675.60,862.64,651.10,876.27,651.10C889.91,651.10,903.55,757.80,917.18,757.80C930.82,757.80,944.45,724.40,958.09,724.40C971.73,724.40,985.36,745.00,999.00,765.60" fill="none" stroke="#38bdf8" stroke-width="1.6"/><path d="M549.00,688.40C562.64,690.63,576.27,692.87,589.91,701.80C603.55,710.73,617.18,776.70,630.82,776.70C644.45,776.70,658.09,700.40,671.73,700.40C685.36,700.40,699.00,776.70,712.64,776.70C726.27,776.70,739.91,644.40,753.55,644.40C767.18,644.40,780.82,648.13,794.45,655.60C808.09,663.07,821.73,725.42,835.36,745.60C849.00,765.78,862.64,776.70,876.27,776.70C889.91,776.70,903.55,776.70,917.18,776.70C930.82,776.70,944.45,747.07,958.09,742.20C971.73,737.33,985.36,736.12,999.00,734.90" fill="none" stroke="#4ade80" stroke-width="1.6"/></svg>
<div class="t yl" style="left:500px;top:606.00px;">280.0<br>Mbps</div>
<div class="t yl" style="left:500px;top:644.17px;">210.0<br>Mbps</div>
<div class="t yl" style="left:500px;top:685.85px;">140.0<br>Mbps</div>
<div class="t yl" style="left:500px;top:727.53px;">70.0<br>Mbps</div>
<div class="t yl" style="left:500px;top:772.70px;">0 bps</div>
<div class="t xl" style="left:529.00px;top:784px;">13:55</div>
<div class="t xl" style="left:569.91px;top:784px;">14:25</div>
<div class="t xl" style="left:610.82px;top:784px;">15:10</div>
<div class="t xl" style="left:651.73px;top:784px;">15:25</div>
<div class="t xl" style="left:692.64px;top:784px;">15:55</div>
<div class="t xl" style="left:733.55px;top:784px;">16:25</div>
<div class="t xl" style="left:774.45px;top:784px;">16:55</div>
<div class="t xl" style="left:815.36px;top:784px;">17:25</div>
<div class="t xl" style="left:856.27px;top:784px;">17:55</div>
<div class="t xl" style="left:897.18px;top:784px;">18:25</div>
<div class="t xl" style="left:938.09px;top:784px;">18:40</div>
<div class="t xl" style="left:979.00px;top:784px;">19:10</div>
<div class="box" style="left:489px;top:815px;width:8px;height:8px;border-radius:50%;background:#38bdf8"></div>
<div class="t" style="left:501px;top:811.50px;font-size:12px;line-height:17px;color:#64748b;font-weight:400;">RX</div>
<div class="box" style="left:532px;top:815px;width:8px;height:8px;border-radius:50%;background:#4ade80"></div>
<div class="t" style="left:544px;top:811.50px;font-size:12px;line-height:17px;color:#64748b;font-weight:400;">TX</div>
<div class="box" style="left:472px;top:860px;width:552px;height:273px;border-radius:8px;border:1px solid #2b3a50;background:#1e293b;box-sizing:border-box"></div>
<div class="t" style="left:489px;top:877.00px;font-size:12px;line-height:17px;color:#64748b;font-weight:400;">sfp-sfpplus1</div>
</body></html>
